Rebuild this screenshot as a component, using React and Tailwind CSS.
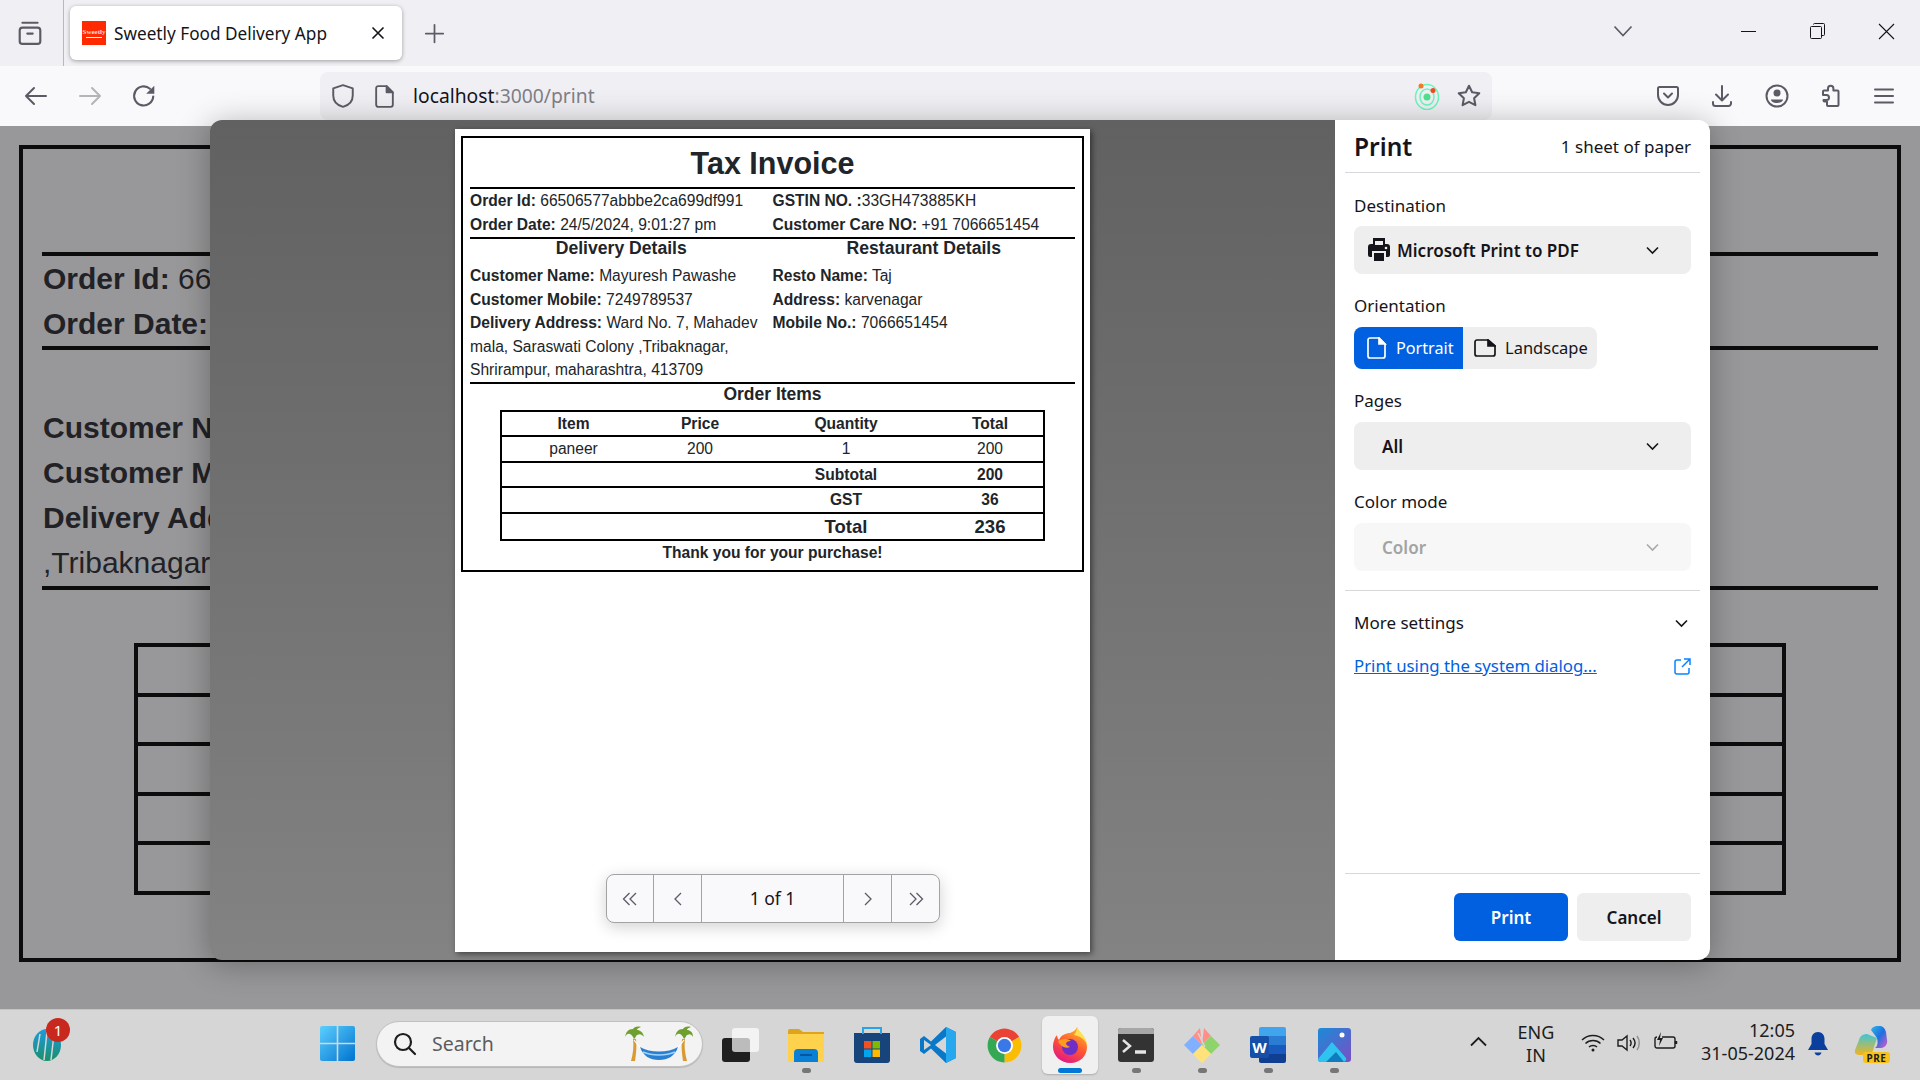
import { useState } from "react";

const ui = "font-['Noto_Sans',sans-serif]";
const arial = "font-['Liberation_Sans',Arial,sans-serif]";

function Ico({ size = 24, className = "", children, fill = "none", stroke = "#5b5b66", sw = 2 }) {
  return (
    <svg
      width={size}
      height={size}
      viewBox="0 0 24 24"
      fill={fill}
      stroke={stroke}
      strokeWidth={sw}
      strokeLinecap="round"
      strokeLinejoin="round"
      className={className}
    >
      {children}
    </svg>
  );
}

function Slot({ w, className = "", children }) {
  return <div className={`flex h-full items-center justify-center shrink-0 ${w} ${className}`}>{children}</div>;
}

function TabBar() {
  return (
    <div className={`flex h-[66px] items-center bg-[#f0f0f4] ${ui}`}>
      <div className="flex h-full w-[64px] shrink-0 items-center justify-center border-r border-[#b8b8be] pr-[4px]">
        <Ico size={26}>
          <rect x="2.5" y="7" width="19" height="15" rx="2.5" />
          <path d="M5 2.5h14M9.5 12.5h5" />
        </Ico>
      </div>
      <div className="ml-[6px] flex h-[54px] w-[332px] shrink-0 items-center rounded-md bg-white pl-[12px] shadow-[0_1px_4px_rgba(0,0,0,0.35)]">
        <div className="flex h-[24px] w-[24px] flex-col items-center justify-center overflow-hidden bg-[#ff2a00] font-['Liberation_Serif',serif] text-[7px] font-bold leading-[8px] text-[#ffd9c8]">
          <span>Sweetly</span>
          <div className="mt-[1px] h-[1px] w-[16px] bg-white" />
        </div>
        <span className="ml-[8px] pt-[1px] text-[17.2px] text-[#15141a]">Sweetly Food Delivery App</span>
        <svg width="14" height="14" viewBox="0 0 14 14" stroke="#15141a" strokeWidth="1.6" className="ml-auto mr-[17px]">
          <path d="M1.5 1.5l11 11M12.5 1.5l-11 11" />
        </svg>
      </div>
      <Slot w="w-[40px]" className="ml-[12px]">
        <Ico size={21} sw={2}>
          <path d="M12 2v20M2 12h20" />
        </Ico>
      </Slot>
      <Slot w="w-[40px]" className="ml-[1149px] pb-[4px]">
        <svg width="20" height="12" viewBox="0 0 20 12" fill="none" stroke="#5b5b66" strokeWidth="1.7">
          <path d="M1.5 1.5L10 10.5l8.5-9" />
        </svg>
      </Slot>
      <Slot w="w-[69px]" className="ml-[71px] pb-[4px]">
        <div className="h-[1px] w-[15px] bg-[#15141a]" />
      </Slot>
      <Slot w="w-[69px]" className="pb-[4px]">
        <svg width="15" height="16" viewBox="0 0 15 16" fill="none" stroke="#15141a" strokeWidth="1">
          <rect x="0.5" y="3.5" width="11" height="12" rx="1" />
          <path d="M3.5 1.5a1 1 0 0 1 1-1h9a1 1 0 0 1 1 1v10a1 1 0 0 1-1 1h-2" />
        </svg>
      </Slot>
      <Slot w="w-[69px]" className="pb-[4px]">
        <svg width="17" height="17" viewBox="0 0 17 17" stroke="#15141a" strokeWidth="1.1">
          <path d="M1 1l15 15M16 1L1 16" />
        </svg>
      </Slot>
    </div>
  );
}

function Toolbar() {
  return (
    <div className={`flex h-[60px] items-center bg-[#f9f9fb] pl-[9px] ${ui}`}>
      <Slot w="w-[54px]">
        <Ico>
          <path d="M2 12h20M10 4l-8 8 8 8" />
        </Ico>
      </Slot>
      <Slot w="w-[54px]">
        <Ico stroke="#b4b4b9">
          <path d="M2 12h20M14 4l8 8-8 8" />
        </Ico>
      </Slot>
      <Slot w="w-[54px]">
        <Ico size={26}>
          <path d="M20.5 12.5a8.8 8.8 0 1 1-3-7.2" />
          <path d="M21.5 2.5v7.5H14z" fill="#5b5b66" stroke="none" />
        </Ico>
      </Slot>
      <div className="ml-[149px] flex h-[48px] w-[1172px] shrink-0 items-center rounded-lg bg-[#f0f0f4] pl-[10px]">
        <Ico size={26} sw={1.8}>
          <path d="M12 2l9 3v6.5c0 5.2-3.6 9-9 10.5-5.400-1.500-9-5.300-9-10.500V5z" />
        </Ico>
        <div className="ml-[16px]">
          <Ico size={25} sw={1.8}>
            <path d="M6 2h8l6 6v12a2 2 0 0 1-2 2H6a2 2 0 0 1-2-2V4a2 2 0 0 1 2-2z" />
            <path d="M14 2l6 6h-6z" fill="#5b5b66" />
          </Ico>
        </div>
        <span className="ml-[16px] pt-[1px] text-[19.3px]">
          <span className="text-[#15141a]">localhost</span>
          <span className="text-[#7f7f87]">:3000/print</span>
        </span>
        <svg width="26" height="28" viewBox="0 0 26 28" fill="none" className="ml-auto">
          <ellipse cx="13" cy="15" rx="11.500" ry="12.500" stroke="#6cf5bd" strokeWidth="1.500" />
          <ellipse cx="13" cy="15" rx="7" ry="8" stroke="#6cf5bd" strokeWidth="1.500" />
          <circle cx="13" cy="15" r="3.500" fill="#4fe08f" />
          <circle cx="7" cy="4" r="2.500" fill="#f47a20" />
          <circle cx="19" cy="8.500" r="2.500" fill="#ee4a24" />
        </svg>
        <div className="ml-[16px] mr-[10px]">
          <Ico size={26} sw={1.9}>
            <path d="M12 2.500l2.900 6 6.600.9-4.800 4.600 1.200 6.500L12 17.400l-5.900 3.100 1.200-6.500-4.800-4.600 6.600-.9z" />
          </Ico>
        </div>
      </div>
      <Slot w="w-[54px]" className="ml-[149px]">
        <Ico>
          <path d="M3.500 3h17A1.500 1.500 0 0 1 22 4.500V11a10 10 0 0 1-20 0V4.500A1.500 1.500 0 0 1 3.500 3z" />
          <path d="M8 9.500l4 4 4-4" />
        </Ico>
      </Slot>
      <Slot w="w-[54px]">
        <Ico>
          <path d="M12 2v14M6 10.500l6 6 6-6M3 18v1.500A2.500 2.500 0 0 0 5.500 22h13a2.500 2.500 0 0 0 2.500-2.500V18" />
        </Ico>
      </Slot>
      <Slot w="w-[54px]" className="pl-[1px]">
        <Ico>
          <circle cx="12" cy="12" r="10.500" />
          <circle cx="12" cy="9" r="3.500" fill="#5b5b66" stroke="none" />
          <path d="M6 15.500h12c0 2-2.500 3.500-6 3.500s-6-1.500-6-3.500z" fill="#5b5b66" stroke="none" />
        </Ico>
      </Slot>
      <Slot w="w-[54px]" className="pl-[1px]">
        <Ico>
          <path d="M4 11V7.500a1 1 0 0 1 1-1h4V4.500a2.700 2.700 0 0 1 5.400 0v2h4.100a1 1 0 0 1 1 1V21a1 1 0 0 1-1 1H9a1 1 0 0 1-1-1v-3.500H5.500a1 1 0 0 1-1-1V16h3a2.500 2.500 0 0 0 0-5z" />
        </Ico>
      </Slot>
      <Slot w="w-[54px]">
        <Ico>
          <path d="M3 5.500h18M3 12h18M3 18.500h18" />
        </Ico>
      </Slot>
    </div>
  );
}

// page underneath the print dialog, only the part that peeks out on the left
function BehindPage() {
  const clip = "ml-[1px] w-[167px] overflow-hidden whitespace-nowrap";
  return (
    <div className={`h-[883px] overflow-hidden bg-[#98989a] px-[19px] pt-[19px] text-[30px] leading-[45px] text-[#222226] ${arial}`}>
      <div className="h-[817px] border-4 border-[#0c0c0c] px-[19px] pt-[103px]">
        <div className="border-t-4 border-[#0c0c0c]">
          <p className={clip}><b>Order Id:</b> 66</p>
          <p className={clip}><b>Order Date:</b></p>
        </div>
        <div className="border-t-4 border-b-4 border-[#0c0c0c] pb-[1px] pt-[55px]">
          <p className={clip}><b>Customer Name</b></p>
          <p className={clip}><b>Customer Mobile</b></p>
          <p className={clip}><b>Delivery Address</b></p>
          <p className={clip}>,Tribaknagar,</p>
        </div>
        <div className="ml-[92px] mr-[92px] mt-[53px] flex flex-col border-x-4 border-t-4 border-[#0c0c0c]">
          <div className="h-[49.500px] border-b-4 border-[#0c0c0c]" />
          <div className="h-[49.500px] border-b-4 border-[#0c0c0c]" />
          <div className="h-[49.500px] border-b-4 border-[#0c0c0c]" />
          <div className="h-[49.500px] border-b-4 border-[#0c0c0c]" />
          <div className="h-[49.500px] border-b-4 border-[#0c0c0c]" />
        </div>
      </div>
    </div>
  );
}

function Row({ label, value }) {
  return (
    <p>
      <b>{label}</b> {value}
    </p>
  );
}

function Invoice() {
  return (
    <div className={`border-2 border-black px-[7px] pb-[6px] text-[15.6px] leading-[24px] text-[#212529] ${arial}`}>
      <h1 className="h-[49px] text-center text-[30.500px] font-bold leading-[50px]">Tax Invoice</h1>
      <div className="grid grid-cols-2 border-t-2 border-black">
        <div>
          <Row label="Order Id:" value="66506577abbbe2ca699df991" />
          <Row label="Order Date:" value="24/5/2024, 9:01:27 pm" />
        </div>
        <div>
          <p>
            <b>GSTIN NO. :</b>33GH473885KH
          </p>
          <Row label="Customer Care NO:" value="+91 7066651454" />
        </div>
      </div>
      <div className="grid grid-cols-2 border-y-2 border-black leading-[23.600px]">
        <div>
          <h2 className="mb-[6px] mt-[-1px] text-center text-[17.600px] font-bold leading-[20px]">Delivery Details</h2>
          <Row label="Customer Name:" value="Mayuresh Pawashe" />
          <Row label="Customer Mobile:" value="7249789537" />
          <Row label="Delivery Address:" value="Ward No. 7, Mahadev mala, Saraswati Colony ,Tribaknagar, Shrirampur, maharashtra, 413709" />
        </div>
        <div>
          <h2 className="mb-[6px] mt-[-1px] text-center text-[17.600px] font-bold leading-[20px]">Restaurant Details</h2>
          <Row label="Resto Name:" value="Taj" />
          <Row label="Address:" value="karvenagar" />
          <Row label="Mobile No.:" value="7066651454" />
        </div>
      </div>
      <h2 className="text-center text-[17.500px] font-bold leading-[20px]">Order Items</h2>
      <table className="ml-[30px] mt-[6px] w-[543px] table-fixed border-2 border-black text-center text-[15.600px] leading-[23.500px]">
        <colgroup>
          <col className="w-[144px]" />
          <col className="w-[110px]" />
          <col className="w-[182px]" />
          <col className="w-[107px]" />
        </colgroup>
        <thead>
          <tr className="border-b-2 border-black font-bold">
            <th>Item</th>
            <th>Price</th>
            <th>Quantity</th>
            <th>Total</th>
          </tr>
        </thead>
        <tbody>
          <tr className="border-b-2 border-black">
            <td>paneer</td>
            <td>200</td>
            <td>1</td>
            <td>200</td>
          </tr>
          <tr className="border-b-2 border-black font-bold">
            <td />
            <td />
            <td>Subtotal</td>
            <td>200</td>
          </tr>
          <tr className="border-b-2 border-black font-bold">
            <td />
            <td />
            <td>GST</td>
            <td>36</td>
          </tr>
          <tr className="text-[18.500px] font-bold leading-[25px]">
            <td />
            <td />
            <td>Total</td>
            <td>236</td>
          </tr>
        </tbody>
      </table>
      <p className="text-center font-bold leading-[23px]">Thank you for your purchase!</p>
    </div>
  );
}

function Pager() {
  const cell = "flex h-full items-center justify-center border-r border-[#a3a3a3]";
  return (
    <div className={`absolute left-[151px] top-[745px] flex h-[49px] w-[334px] items-center rounded-lg border border-[#a3a3a3] bg-[#f9f9fb] text-[17.5px] text-[#15141a] shadow-[0_4px_16px_rgba(0,0,0,0.18)] ${ui}`}>
      <div className={`${cell} w-[47px]`}>
        <svg width="16" height="14" viewBox="0 0 16 14" fill="none" stroke="#5b5b66" strokeWidth="1.300">
          <path d="M7.500 1L1.500 7l6 6M14 1L8 7l6 6" />
        </svg>
      </div>
      <div className={`${cell} w-[48px]`}>
        <svg width="10" height="14" viewBox="0 0 10 14" fill="none" stroke="#5b5b66" strokeWidth="1.300">
          <path d="M8 1L2 7l6 6" />
        </svg>
      </div>
      <div className={`${cell} w-[142px]`}>1 of 1</div>
      <div className={`${cell} w-[48px]`}>
        <svg width="10" height="14" viewBox="0 0 10 14" fill="none" stroke="#5b5b66" strokeWidth="1.300">
          <path d="M2 1l6 6-6 6" />
        </svg>
      </div>
      <div className="flex h-full flex-1 items-center justify-center">
        <svg width="16" height="14" viewBox="0 0 16 14" fill="none" stroke="#5b5b66" strokeWidth="1.300">
          <path d="M2 1l6 6-6 6M8.500 1l6 6-6 6" />
        </svg>
      </div>
    </div>
  );
}

function Chevron({ color = "#15141a" }) {
  return (
    <svg width="13" height="9" viewBox="0 0 13 9" fill="none" stroke={color} strokeWidth="1.600">
      <path d="M1 1.500l5.500 5.500L12 1.500" />
    </svg>
  );
}

function SelectBox({ children, disabled }) {
  return (
    <div className={`mx-[19px] flex h-[48px] items-center rounded-lg pr-[32px] ${disabled ? "bg-[#f7f7f7]" : "bg-[#eeeeee]"}`}>
      {children}
      <div className="ml-auto flex">
        <Chevron color={disabled ? "#a8a8a8" : "#15141a"} />
      </div>
    </div>
  );
}

function PrintPanel() {
  return (
    <div className={`flex w-[375px] shrink-0 flex-col bg-white text-[17px] text-[#15141a] ${ui}`}>
      <div className="mx-[10px] flex h-[53px] items-center justify-between border-b border-[#d8d8dc] pl-[9px] pr-[10px] pt-[2px]">
        <h1 className="text-[24.500px] font-semibold">Print</h1>
        <span className="mr-[-1px]">1 sheet of paper</span>
      </div>
      <p className="ml-[19px] mt-[21px] leading-[24px]">Destination</p>
      <div className="mt-[8px]">
        <SelectBox>
          <svg width="22" height="24" viewBox="0 0 22 24" className="ml-[14px]">
            <path d="M5 0h12v6H5z" fill="#15141a" />
            <path d="M3 6h16a3 3 0 0 1 3 3v8a2 2 0 0 1-2 2h-2v-6H4v6H2a2 2 0 0 1-2-2V9a3 3 0 0 1 3-3z" fill="#15141a" />
            <rect x="6" y="15" width="10" height="8" fill="#15141a" />
            <rect x="7" y="3" width="8" height="4" fill="#eeeeee" />
            <circle cx="18" cy="10" r="1.300" fill="#eeeeee" />
          </svg>
          <span className="ml-[7px] pt-[1px] font-semibold">Microsoft Print to PDF</span>
        </SelectBox>
      </div>
      <p className="ml-[19px] mt-[20px] leading-[24px]">Orientation</p>
      <div className="ml-[19px] mt-[9px] flex h-[42px] w-[243px]">
        <div className="flex w-[109px] items-center rounded-l-lg bg-[#0060df] pl-[13px] text-[16.2px] text-white">
          <svg width="20" height="22" viewBox="0 0 20 22" fill="none" stroke="#fff" strokeWidth="1.700">
            <path d="M3 1h9l6 6v12a2 2 0 0 1-2 2H3a2 2 0 0 1-2-2V3a2 2 0 0 1 2-2z" />
            <path d="M12 1l6 6h-6z" fill="#fff" />
          </svg>
          <span className="ml-[9px]">Portrait</span>
        </div>
        <div className="flex flex-1 items-center rounded-r-lg bg-[#eeeeee] pl-[11px] text-[16.5px]">
          <svg width="22" height="18" viewBox="0 0 22 18" fill="none" stroke="#15141a" strokeWidth="1.700">
            <path d="M3 1h11l7 6v8a2 2 0 0 1-2 2H3a2 2 0 0 1-2-2V3a2 2 0 0 1 2-2z" />
            <path d="M14 1l7 6h-7z" fill="#15141a" />
          </svg>
          <span className="ml-[9px]">Landscape</span>
        </div>
      </div>
      <p className="ml-[19px] mt-[20px] leading-[24px]">Pages</p>
      <div className="mt-[9px]">
        <SelectBox>
          <span className="ml-[28px] pt-[1px] font-semibold">All</span>
        </SelectBox>
      </div>
      <p className="ml-[19px] mt-[20px] leading-[24px]">Color mode</p>
      <div className="mt-[9px]">
        <SelectBox disabled>
          <span className="ml-[28px] pt-[1px] font-semibold text-[#a3a3a3]">Color</span>
        </SelectBox>
      </div>
      <div className="mx-[10px] mt-[19px] border-t border-[#d8d8d8]" />
      <div className="mt-[20px] flex items-center justify-between pl-[19px] pr-[22px] leading-[24px]">
        <span>More settings</span>
        <Chevron />
      </div>
      <div className="mt-[19px] flex items-center justify-between pl-[19px] pr-[19px] leading-[24px]">
        <span className="text-[16.8px] text-[#0060df] underline">Print using the system dialog...</span>
        <svg width="17" height="17" viewBox="0 0 17 17" fill="none" stroke="#0a84ff" strokeWidth="1.500">
          <path d="M7 2H3a2 2 0 0 0-2 2v10a2 2 0 0 0 2 2h10a2 2 0 0 0 2-2v-4" />
          <path d="M10 1h6v6M16 1L8 9" />
        </svg>
      </div>
      <div className="mx-[10px] mt-auto flex h-[87px] justify-end border-t border-[#d8d8d8] pr-[9px] pt-[19px]">
        <button className="h-[48px] w-[114px] rounded-md bg-[#0060df] pt-[1px] font-semibold text-white">Print</button>
        <button className="ml-[9px] h-[48px] w-[114px] rounded-md bg-[#eeeeee] pt-[1px] font-semibold">Cancel</button>
      </div>
    </div>
  );
}

function PrintDialog() {
  return (
    <div className="absolute left-[210px] top-[120px] z-10 flex h-[840px] w-[1500px] overflow-hidden rounded-xl shadow-[0_4px_32px_rgba(0,0,0,0.3)]">
      <div className="w-[1125px] shrink-0 bg-gradient-to-b from-[#616161] to-[#838383] pl-[245px] pt-[9px]">
        <div className="relative h-[823px] w-[635px] bg-white px-[6px] pt-[7px] shadow-[2px_2px_6px_rgba(0,0,0,0.5)]">
          <Invoice />
          <Pager />
        </div>
      </div>
      <PrintPanel />
    </div>
  );
}

function WinLogo() {
  return (
    <svg width="35" height="35" viewBox="0 0 35 35">
      <defs>
        <linearGradient id="win" x1="0" y1="0" x2="1" y2="1">
          <stop offset="0" stopColor="#5ccfff" />
          <stop offset="1" stopColor="#0073cf" />
        </linearGradient>
      </defs>
      <path d="M2 0h14.700v16.700H0V2a2 2 0 0 1 2-2zM18.300 0H33a2 2 0 0 1 2 2v14.700H18.300zM0 18.300h16.700V35H2a2 2 0 0 1-2-2zM18.300 18.300H35V33a2 2 0 0 1-2 2H18.300z" fill="url(#win)" />
    </svg>
  );
}

function Hammock() {
  return (
    <svg width="68" height="36" viewBox="0 0 68 36" fill="none">
      <path d="M8 13C9 20 8 28 6 35h4c1-7 2-14 1-22zM60 13c-1 7 0 15 2 22h-4c-1-7-2-14-1-22z" fill="#d99a34" />
      <path d="M9 14l7 9M59 14l-7 9" stroke="#fff" strokeWidth="1.200" />
      <path d="M15 21c10 6 28 6 38 0-3 9-10 13-19 13s-16-4-19-13z" fill="#2a7fd0" />
      <path d="M18 26c9 4 23 4 32 0" stroke="#9fd4ff" strokeWidth="1.500" />
      <path d="M9 13C6 6 2 7 0 11c1-5 3-8 8-8 1-2 4-3 8-2-3 1-4 2-4 3 3 0 6 2 7 7-3-4-6-3-8-1 0 1-1 2-2 3z" fill="#6f9f2c" />
      <path d="M59 13c-3-7-7-6-9-2 1-5 3-8 8-8 1-2 4-3 8-2-3 1-4 2-4 3 3 0 6 2 6 7-2-4-5-3-7-1 0 1-1 2-2 3z" fill="#6f9f2c" />
    </svg>
  );
}

function TaskSlot({ children, running, active }) {
  return (
    <div className="relative flex h-full w-[66px] shrink-0 flex-col items-center pt-[17px]">
      {active && <div className="absolute left-[5px] top-[6px] h-[58px] w-[56px] rounded-md bg-[#f0f0f0] shadow-[0_1px_2px_rgba(0,0,0,0.2)]" />}
      <div className="relative flex h-[36px] items-center">{children}</div>
      {running && <div className="absolute bottom-[7px] h-[5px] w-[9px] rounded-full bg-[#767676]" />}
      {active && <div className="absolute bottom-[7px] h-[5px] w-[24px] rounded-full bg-[#0078d4]" />}
    </div>
  );
}

function Taskbar() {
  return (
    <div className={`flex h-[71px] items-start border-t border-[#c4c4c4] bg-[#d6d6d6] ${ui}`}>
      <div className="relative ml-[32px] mt-[16px] h-[36px] w-[30px] shrink-0">
        <svg width="30" height="36" viewBox="0 0 30 36" className="absolute left-0 top-[2px]">
          <defs>
            <linearGradient id="icc" x1="0" y1="0" x2="0" y2="1">
              <stop offset="0" stopColor="#1b9ce0" />
              <stop offset="1" stopColor="#1b8f6b" />
            </linearGradient>
          </defs>
          <ellipse cx="15" cy="17" rx="14" ry="16" fill="url(#icc)" />
          <path d="M8 6L5 24M15 4l-3 28M22 6l-3 26" stroke="#d6d6d6" strokeWidth="1.500" />
        </svg>
        <div className="absolute left-[14px] top-[-8px] flex h-[24px] w-[24px] items-center justify-center rounded-full bg-[#c8281e] text-[15px] text-white">
          1
        </div>
      </div>
      <div className="ml-[258px] mt-[16px] shrink-0">
        <WinLogo />
      </div>
      <div className="ml-[21px] mt-[11px] flex h-[46px] w-[327px] shrink-0 items-center rounded-full border border-[#c0c0c0] bg-[#f3f3f3] pl-[16px] pr-[9px] shadow-[0_1px_1px_rgba(0,0,0,0.15)]">
        <svg width="24" height="24" viewBox="0 0 24 24" fill="none" stroke="#1d1d1d" strokeWidth="2.200" strokeLinecap="round">
          <circle cx="10" cy="10" r="8" />
          <path d="M16 16l6 6" />
        </svg>
        <span className="ml-[15px] text-[19.500px] text-[#5c5c5c]">Search</span>
        <div className="ml-auto flex">
          <Hammock />
        </div>
      </div>
      <div className="ml-[4px] flex h-full">
        <TaskSlot>
          <div className="relative h-[34px] w-[37px]">
            <div className="absolute bottom-0 left-0 h-[24px] w-[28px] rounded-[3px] bg-[#1f1f1f]" />
            <div className="absolute right-0 top-0 h-[24px] w-[27px] rounded-[3px] bg-white/70" />
          </div>
        </TaskSlot>
        <TaskSlot running>
          <svg width="36" height="33" viewBox="0 0 36 33">
            <path d="M0 2a2 2 0 0 1 2-2h9l4 3h21v8H0z" fill="#dfa31c" />
            <path d="M0 5h36v28H0z" fill="#ffd24d" />
            <path d="M6 33v-9a4 4 0 0 1 4-4h16a4 4 0 0 1 4 4v9z" fill="#0a7fd6" />
            <path d="M12 26h12" stroke="#054a85" strokeWidth="1.500" />
          </svg>
        </TaskSlot>
        <TaskSlot>
          <svg width="36" height="36" viewBox="0 0 36 36">
            <path d="M0 6h36v27a3 3 0 0 1-3 3H3a3 3 0 0 1-3-3z" fill="#17447a" />
            <path d="M9 7V1h18v6" fill="none" stroke="#2aa4e8" strokeWidth="2" />
            <rect x="10" y="14" width="7.500" height="7.500" fill="#f25022" />
            <rect x="18.500" y="14" width="7.500" height="7.500" fill="#7fba00" />
            <rect x="10" y="22.500" width="7.500" height="7.500" fill="#00a4ef" />
            <rect x="18.500" y="22.500" width="7.500" height="7.500" fill="#ffb900" />
          </svg>
        </TaskSlot>
        <TaskSlot>
          <svg width="36" height="36" viewBox="0 0 36 36">
            <path d="M26 0l10 5v26l-10 5-15-14.500L4 27l-4-3v-12l4-3 7 5.500z" fill="#0a78c8" />
            <path d="M26 0l10 5v26l-10 5z" fill="#27a8ee" />
            <path d="M26 9.500L15 18l11 8.500z" fill="#d6d6d6" />
            <path d="M4 13l7 5-7 5z" fill="#d6d6d6" />
          </svg>
        </TaskSlot>
        <TaskSlot>
          <svg width="37" height="37" viewBox="0 0 24 24">
            <path d="M2.500 6.500A11 11 0 0 1 21.500 6.500L12 12z" fill="#ea4335" />
            <path d="M21.500 6.500A11 11 0 0 1 12 23L12 12z" fill="#fbbc04" />
            <path d="M12 23A11 11 0 0 1 2.500 6.500L12 12z" fill="#34a853" />
            <circle cx="12" cy="12" r="5.500" fill="#fff" />
            <circle cx="12" cy="12" r="4.300" fill="#3b78e7" />
          </svg>
        </TaskSlot>
        <TaskSlot active>
          <svg width="35" height="36" viewBox="0 0 35 36">
            <defs>
              <linearGradient id="ff" x1="0.800" y1="0" x2="0.300" y2="1">
                <stop offset="0" stopColor="#ffbd2e" />
                <stop offset="0.500" stopColor="#ff5a2e" />
                <stop offset="1" stopColor="#e31587" />
              </linearGradient>
            </defs>
            <path d="M24 0c1 5 10 9 10 20 0 9-7 16-16.500 16S0 29 0 20C0 15 2 10 4 8c0 2 1 4 2 5 2-5 7-7 11-7 3-1 6-3 7-6z" fill="url(#ff)" />
            <path d="M24 0c1 5 10 9 10 18-2-6-7-9-13-10 2-2 3-5 3-8z" fill="#ffe14a" />
            <circle cx="17" cy="20" r="8" fill="#6e2fc9" />
            <path d="M5 14c3-2 9-3 13 0-3 0-5 1-5 3 1 2 3 2 4 3-5 2-10-1-12-6z" fill="#ff9a1f" />
          </svg>
        </TaskSlot>
        <TaskSlot running>
          <div className="h-[34px] w-[36px] overflow-hidden rounded-[3px] bg-[#333333]">
            <div className="h-[6px] w-full bg-[#a7a7a7]" />
            <svg width="36" height="28" viewBox="0 0 36 28" fill="none" stroke="#e4e4e4" strokeWidth="2.500">
              <path d="M5 6l7 6-7 6" />
              <path d="M17 18h11" strokeWidth="3.500" />
            </svg>
          </div>
        </TaskSlot>
        <TaskSlot running>
          <svg width="36" height="36" viewBox="0 0 36 36">
            <path d="M18 18L9 9l7-8z" fill="#ff8f87" />
            <path d="M18 18l9-9-7-8z" fill="#ff8f87" />
            <path d="M18 18L9 9 0 18l9 9z" fill="#80b0ff" />
            <path d="M18 18l9-9 9 9-9 9z" fill="#8fd46a" />
            <path d="M18 18l-9 9 9 9 9-9z" fill="#ffe27a" />
            <path d="M14 6l7 14" stroke="#d6d6d6" strokeWidth="1.500" />
          </svg>
        </TaskSlot>
        <TaskSlot running>
          <div className="relative h-[36px] w-[36px]">
            <div className="absolute right-0 top-0 h-[36px] w-[27px] overflow-hidden rounded-[2px]">
              <div className="h-[9px] bg-[#41a5ee]" />
              <div className="h-[9px] bg-[#2b7cd3]" />
              <div className="h-[9px] bg-[#185abd]" />
              <div className="h-[9px] bg-[#103f91]" />
            </div>
            <div className="absolute left-0 top-[9px] flex h-[22px] w-[19px] items-center justify-center rounded-[2px] bg-[#1450a8] text-[15px] font-bold text-white">
              W
            </div>
          </div>
        </TaskSlot>
        <TaskSlot running>
          <svg width="33" height="34" viewBox="0 0 33 34">
            <defs>
              <linearGradient id="ph" x1="0" y1="0" x2="1" y2="1">
                <stop offset="0" stopColor="#1a8bd8" />
                <stop offset="1" stopColor="#7a4fc4" />
              </linearGradient>
            </defs>
            <rect width="33" height="34" rx="3" fill="url(#ph)" />
            <circle cx="24" cy="7" r="2.500" fill="#fff" />
            <path d="M0 31L14 14l14 16a3 3 0 0 1-3 4H3a3 3 0 0 1-3-3z" fill="#2fc3f0" />
            <path d="M8 34l10-10 8 10z" fill="#0f7cc0" />
          </svg>
        </TaskSlot>
      </div>
      <div className="ml-[91px] mt-[25px] flex h-[40px] w-[40px] shrink-0 items-start justify-center pt-[1px]">
        <svg width="17" height="11" viewBox="0 0 17 11" fill="none" stroke="#1d1d1d" strokeWidth="1.800">
          <path d="M1 9.500L8.500 2 16 9.500" />
        </svg>
      </div>
      <div className="ml-[6px] mt-[11px] w-[64px] shrink-0 text-center text-[18px] leading-[23px] text-[#1d1d1d]">
        <p>ENG</p>
        <p>IN</p>
      </div>
      <div className="ml-[13px] mt-[24px] shrink-0">
        <svg width="24" height="18" viewBox="0 0 24 18" fill="none" stroke="#1d1d1d" strokeWidth="1.500">
          <path d="M1 6c6-6 16-6 22 0M4.500 9.500c4-4 11-4 15 0M8 13c2-2 6-2 8 0" />
          <circle cx="12" cy="16" r="1.500" fill="#1d1d1d" stroke="none" />
        </svg>
      </div>
      <div className="ml-[12px] mt-[24px] shrink-0">
        <svg width="24" height="18" viewBox="0 0 24 18" fill="none" stroke="#1d1d1d" strokeWidth="1.400">
          <path d="M1 6v6h4l5 4V2L5 6z" />
          <path d="M13 6c1.500 2 1.500 4 0 6M16 4c2.500 3 2.500 7 0 10" />
          <path d="M20 2c3 4 3 10 0 14" stroke="#8f8f8f" />
        </svg>
      </div>
      <div className="ml-[13px] mt-[22px] shrink-0">
        <svg width="24" height="20" viewBox="0 0 24 20" fill="none" stroke="#1d1d1d" strokeWidth="1.400">
          <path d="M8 5h11a2 2 0 0 1 2 2v7a2 2 0 0 1-2 2H3a2 2 0 0 1-2-2V7a2 2 0 0 1 2-2" />
          <path d="M22 9v3" strokeWidth="2.500" />
          <path d="M7 0L3 8h3l-1 6 4-8H6z" fill="#1d1d1d" stroke="none" />
        </svg>
      </div>
      <div className="ml-[10px] mt-[9px] w-[107px] shrink-0 text-right text-[18px] leading-[23px] text-[#1d1d1d]">
        <p>12:05</p>
        <p>31-05-2024</p>
      </div>
      <div className="ml-[13px] mt-[22px] shrink-0">
        <svg width="20" height="24" viewBox="0 0 20 24" fill="#0a3f9e">
          <path d="M10 0c4 0 6.500 3 6.500 7v5l3.500 6H0l3.500-6V7c0-4 2.500-7 6.500-7z" />
          <path d="M6.500 20.500h7c-.5 2-2 3-3.500 3s-3-1-3.500-3z" />
        </svg>
      </div>
      <div className="relative ml-[27px] mt-[16px] h-[34px] w-[36px] shrink-0">
        <svg width="36" height="30" viewBox="0 0 36 30">
          <defs>
            <linearGradient id="cp" x1="0" y1="0" x2="1" y2="1">
              <stop offset="0" stopColor="#2fb5e8" />
              <stop offset="0.500" stopColor="#1f6fe0" />
              <stop offset="1" stopColor="#e05ac8" />
            </linearGradient>
            <linearGradient id="cp2" x1="0" y1="0" x2="0" y2="1">
              <stop offset="0" stopColor="#3ec6d8" />
              <stop offset="1" stopColor="#f2b41e" />
            </linearGradient>
          </defs>
          <path d="M12 8c-4 0-7 2-8 6L0 24c-1 3 1 5 4 5h9c4 0 5-4 6-8l3-9z" fill="url(#cp2)" />
          <path d="M16 4c1-3 4-4 6-4h4c3 1 4 3 5 6l1 8c1 4-2 8-6 8H20c3-2 3-6 2-10z" fill="url(#cp)" />
        </svg>
        <div className="absolute bottom-[-3px] left-[8px] flex h-[11px] w-[27px] items-center justify-center rounded-[3px] bg-[#f7c21b] text-[10px] font-bold leading-none tracking-[0.5px] text-[#1d1d1d]">
          PRE
        </div>
      </div>
    </div>
  );
}

export default function App() {
  const [open] = useState(true);

  return (
    <div className="relative h-screen w-screen overflow-hidden bg-[#98989a]">
      <TabBar />
      <Toolbar />
      <BehindPage />
      <Taskbar />
      {open && <PrintDialog />}
    </div>
  );
}
